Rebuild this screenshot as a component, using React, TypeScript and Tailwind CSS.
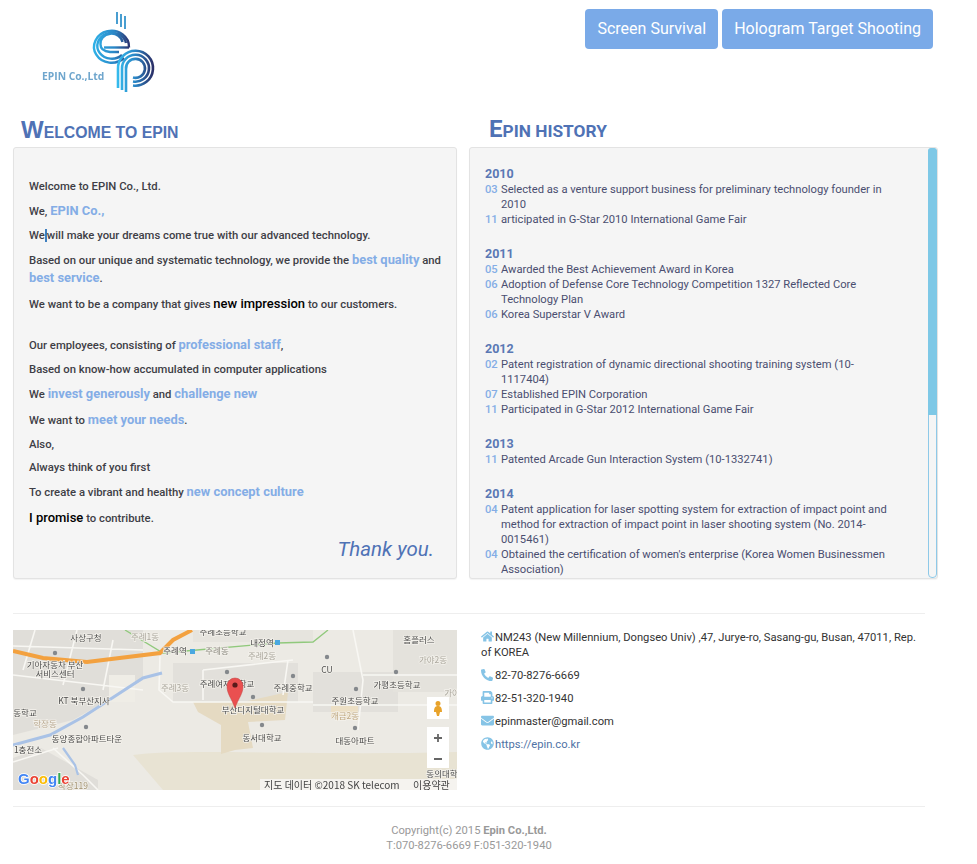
import React from "react";
import { FaHome, FaPrint, FaEnvelope, FaGlobeAmericas, FaPhoneAlt } from "react-icons/fa";

function Logo() {
  return (
    <svg width="120" height="90" viewBox="40 10 120 90" className="block blur-[0.3px]">
      <defs>
        <linearGradient id="le" gradientUnits="userSpaceOnUse" x1="93" x2="129" y1="0" y2="0">
          <stop offset="0" stopColor="#2fb2e8" />
          <stop offset="0.6" stopColor="#2a86c6" />
          <stop offset="1" stopColor="#2b3572" />
        </linearGradient>
        <linearGradient id="lp" gradientUnits="userSpaceOnUse" x1="117" x2="153" y1="0" y2="0">
          <stop offset="0" stopColor="#35bcee" />
          <stop offset="0.5" stopColor="#2a86c6" />
          <stop offset="1" stopColor="#2b3068" />
        </linearGradient>
      </defs>
      <path d="M117 12V24M121 14V27M125 16V29" fill="none" strokeWidth="1.7" stroke="#2a8ec9" />
      <g fill="none" strokeWidth="2.4" stroke="url(#le)">
        <path d="M129 47.5A17.5 16 0 1 0 124 58" />
        <path d="M126 43A14.5 13 0 1 0 122 55" />
        <path d="M122.5 42A11 9.5 0 0 0 100.5 44.5Q100.5 51 110 52H119" />
        <path d="M129 47.5H104" />
      </g>
      <g fill="none" strokeWidth="2.6" stroke="url(#lp)">
        <path d="M118 88V69A17.5 17.5 0 1 1 133 85.5" />
        <path d="M122 90V69A13.5 13.5 0 1 1 133 81.5" />
        <path d="M126 92V69A9.5 9.5 0 1 1 133 77.5" />
      </g>
      <text x="42" y="80" fontFamily="'Open Sans',sans-serif" fontSize="10.3" fontWeight="700" fill="#6fa6cd">EPIN Co.,Ltd</text>
    </svg>
  );
}

function MapView() {
  const labels: [number, number, string, string?][] = [
    [73, 7, "사상구청"], [132, 6, "주례1동", "#aaa69c"], [210, 1, "주례초등학교"], [249, 12, "내정역"],
    [406, 9, "홈플러스"], [162, 20, "주례역"], [204, 20, "주례동", "#8c8a80"], [249, 25, "주례2동", "#aaa69c"],
    [42, 34, "기아자동차 부산"], [42, 43, "서비스센터"], [314, 39, "CU"], [420, 29, "가야2동", "#aaa69c"],
    [162, 57, "주례3동", "#aaa69c"], [214, 53, "주례여자중학교"], [280, 57, "주례중학교"], [384, 54, "가평초등학교"],
    [71, 70, "KT 북부산지사"], [12, 82, "동학교"], [342, 70, "주원초등학교"], [240, 79, "부산디지털대학교"],
    [32, 93, "학장동", "#b8a890"], [332, 85, "개금2동", "#c0a880"], [249, 107, "동서대학교"],
    [74, 108, "동양종합아파트타운"], [342, 110, "대동아파트"], [15, 119, "1충전소"], [429, 143, "동의대학"],
    [60, 155, "착장119", "#a09070"], [439, 62, "가야", "#aaa69c"],
  ];
  return (
    <svg width="444" height="160" viewBox="0 0 444 160" className="block">
      <rect width="444" height="160" fill="#eceae4" />
      <path d="M0 0H130V50L60 90L0 105Z" fill="#e0ded9" />
      <path d="M0 128L28 118L85 150V160H0Z" fill="#e0ded9" />
      <path d="M160 33H285V72H160Z" fill="#e2e0db" />
      <path d="M180 0H300V12H180Z" fill="#e6e4de" />
      <path d="M300 42H385V82H300Z" fill="#e2e0db" />
      <path d="M380 0H444V62H380Z" fill="#e4e2dc" />
      <path d="M96 45H122V72H96Z" fill="#efede6" />
      <path d="M120 125C170 118 300 126 444 122V160H150Z" fill="#e8e3d3" />
      <path d="M180 72H230L275 62L272 90L235 92L240 118L222 120L208 124L208 95L185 82Z" fill="#e5dac2" />
      <path d="M318 76H345V88H318Z" fill="#ecdfc4" />
      <g fill="none" stroke="#f8f7f3" strokeWidth="1.6">
        <path d="M0 45L130 60M0 16L130 20M22 0L10 40M64 0L50 55M100 10L90 60" />
        <path d="M147 26L146 60L160 72H300" />
        <path d="M190 40L280 30M275 30L270 65M190 40L190 70" />
        <path d="M340 0L350 50L345 100M350 45L444 45M300 75H444" />
        <path d="M40 118L70 145L85 160M0 132L45 118" />
      </g>
      <path d="M0 115L37 105L70 87L130 48L149 43" fill="none" stroke="#a9c2e6" strokeWidth="3" />
      <path d="M50 118L62 135L65 145" fill="none" stroke="#a9c2e6" strokeWidth="2.2" />
      <path d="M112 0L150 23L184 20L264 13L300 12L315 0" fill="none" stroke="#90c97c" strokeWidth="1.3" />
      <path d="M0 21L30 28L74 32L147 23L160 10L179 0" fill="none" stroke="#f3a13f" strokeWidth="4" />
      <g fill="#84888c">
        {[[42, 23],[70, 59],[214, 42],[280, 46],[240, 67],[343, 59],[383, 42],[73, 97],[249, 95],[342, 98],[314, 27]].map(([x, y], i) => (
          <circle key={i} cx={x} cy={y} r="2.2" />
        ))}
      </g>
      {labels.map(([x, y, t, c], i) => (
        <text key={i} x={x} y={y + 3.5} textAnchor="middle" fontFamily="'Noto Sans CJK KR',sans-serif" fontSize="8.5" fill={c ?? "#4c4c4c"} stroke="#f4f2ec" strokeWidth="1.5" paintOrder="stroke">{t}</text>
      ))}
      <rect x="177" y="19" width="5" height="5" fill="#4aa8e0" /><rect x="262" y="10" width="5" height="5" fill="#4aa8e0" />
      <path d="M222 78C218 67 214 64 214 56A8 8 0 0 1 230 56C230 64 226 67 222 78Z" fill="#ea5050" stroke="#c04040" strokeWidth="0.5" />
      <circle cx="222" cy="55" r="2.6" fill="#5a1a1a" />
      <rect x="414" y="67" width="22" height="22" fill="#fff" />
      <path d="M425 71A2.5 2.5 0 0 1 425 76C428 76 429 78 429 82L427 82L426 86H424L423 82L421 82C421 78 422 76 425 76A2.5 2.5 0 0 1 425 71Z" fill="#e8a32b" />
      <rect x="414" y="97" width="22" height="41" fill="#fff" />
      <path d="M421 108H429M425 104V112M421 129H429" stroke="#666" strokeWidth="1.8" />
      <text x="5" y="154" fontFamily="'Liberation Sans',sans-serif" fontWeight="700" fontSize="15" stroke="#fff" strokeWidth="1.5" paintOrder="stroke">
        <tspan fill="#4285f4">G</tspan><tspan fill="#ea4335">o</tspan><tspan fill="#fbbc05">o</tspan><tspan fill="#4285f4">g</tspan><tspan fill="#34a853">l</tspan><tspan fill="#ea4335">e</tspan>
      </text>
      <rect x="247" y="149" width="197" height="11" fill="#f5f3ef" />
      <text x="251" y="159" fontFamily="'Noto Sans CJK KR',sans-serif" fontSize="10" fill="#444">지도 데이터 ©2018 SK telecom</text>
      <text x="400" y="159" fontFamily="'Noto Sans CJK KR',sans-serif" fontSize="10" fill="#444">이용약관</text>
    </svg>
  );
}

const H = ({ children }: { children: React.ReactNode }) => (
  <span className="text-[12.9px] font-bold text-[#84ade6]">{children}</span>
);

function P({ children, className = "" }: { children: React.ReactNode; className?: string }) {
  return <p className={`leading-[17px] min-h-[17px] ${className}`}>{children}</p>;
}

const history: { year: string; items: [string, string][] }[] = [
  { year: "2010", items: [["03", "Selected as a venture support business for preliminary technology founder in 2010"], ["11", "articipated in G-Star 2010 International Game Fair"]] },
  { year: "2011", items: [["05", "Awarded the Best Achievement Award in Korea"], ["06", "Adoption of Defense Core Technology Competition 1327 Reflected Core Technology Plan"], ["06", "Korea Superstar V Award"]] },
  { year: "2012", items: [["02", "Patent registration of dynamic directional shooting training system (10-1117404)"], ["07", "Established EPIN Corporation"], ["11", "Participated in G-Star 2012 International Game Fair"]] },
  { year: "2013", items: [["11", "Patented Arcade Gun Interaction System (10-1332741)"]] },
  { year: "2014", items: [["04", "Patent application for laser spotting system for extraction of impact point and method for extraction of impact point in laser shooting system (No. 2014-0015461)"], ["04", "Obtained the certification of women's enterprise (Korea Women Businessmen Association)"], ["07", "Selected as a promising enterprise of export for the small and medium business"]] },
];

const panel = "bg-[#f5f5f5] border border-[#e3e3e3] rounded-[3px] shadow-[0_1px_1px_rgba(0,0,0,0.05)] h-[432px]";
const heading = "h-[32px] pt-[1px] text-[#4f72b5] leading-[27px] font-bold uppercase first-letter:text-[24px]";

function Contact({ icon, children }: { icon: React.ReactNode; children: React.ReactNode }) {
  return (
    <p className="mb-[8px] text-[11.2px] leading-[15px] text-[#333]">
      <span className="inline-block w-[14px] align-[-2px] text-[#86c4e6] text-[13px]">{icon}</span>
      {children}
    </p>
  );
}

export default function App() {
  return (
    <div className="w-[977px] h-[864px] bg-white font-['Roboto',sans-serif] overflow-hidden">
      <header className="flex justify-between h-[115px]">
        <div className="ml-[40px] mt-[10px]"><Logo /></div>
        <div className="flex gap-[4px] mt-[9px] mr-[44px] h-[40px]">
          {["Screen Survival", "Hologram Target Shooting"].map((t) => (
            <button key={t} className="px-[12px] bg-[#7aaae8] text-white text-[16px] rounded-[4px]">{t}</button>
          ))}
        </div>
      </header>

      <main className="flex gap-[12px] ml-[13px]">
        <section className="w-[444px]">
          <h2 className={`${heading} pl-[8px] text-[15.8px] font-['Liberation_Sans',sans-serif]`}>Welcome to epin</h2>
          <div className={`${panel} pl-[15px] pr-[12px] pt-[30px] text-[11.3px] font-medium text-[#3e3e46]`}>
            <P>Welcome to EPIN Co., Ltd.</P>
            <P className="mt-[7px]">We, <H>EPIN Co.,</H></P>
            <P className="mt-[7px]">We<span className="inline-block w-[2px] h-[13px] bg-[#3f7fbf] align-[-3px]" />will make your dreams come true with our advanced technology.</P>
            <P className="mt-[7px]">Based on our unique and systematic technology, we provide the <H>best quality</H> and <H>best service</H>.</P>
            <P className="mt-[8px]">We want to be a company that gives <span className="text-[13px] text-black">new impression</span> to our customers.</P>
            <P className="mt-[23px]">Our employees, consisting of <H>professional staff</H>,</P>
            <P className="mt-[7px]">Based on know-how accumulated in computer applications</P>
            <P className="mt-[7px]">We <H>invest generously</H> and <H>challenge new</H></P>
            <P className="mt-[8px]">We want to <H>meet your needs</H>.</P>
            <P className="mt-[7px]">Also,</P>
            <P className="mt-[6px]">Always think of you first</P>
            <P className="mt-[7px]">To create a vibrant and healthy <H>new concept culture</H></P>
            <P className="mt-[8px]"><span className="text-[13px] text-black">I promise</span> to contribute.</P>
            <p className="text-right text-[20.5px] italic font-normal text-[#4f72b5] leading-[28px] mr-[10px] mt-[8px]">Thank you.</p>
          </div>
        </section>

        <section className="w-[469px]">
          <h2 className={`${heading} pl-[20px] text-[17.3px]`}>Epin history</h2>
          <div className={`${panel} relative overflow-hidden pl-[15px] pr-[41px] pt-[18px]`}>
            {history.map((g) => (
              <div key={g.year} className="mb-[19px]">
                <div className="text-[12.5px] leading-[16px] font-bold text-[#5a78b4]">{g.year}</div>
                {g.items.map(([m, t], i) => (
                  <div key={i} className="flex text-[11.2px] leading-[15px] text-[#4a4e70]">
                    <span className="w-[16px] flex-none font-medium text-[#84ade6]">{m}</span>
                    <span>{t}</span>
                  </div>
                ))}
              </div>
            ))}
            <div className="absolute right-0 top-0 bottom-0 w-[9px] border border-[#8ec9e8] rounded-[4px]">
              <div className="h-[267px] bg-[#7ec8e6] rounded-t-[3px] -mx-px -mt-px" />
            </div>
          </div>
        </section>
      </main>

      <footer className="w-[912px] ml-[13px] mt-[34px]">
        <div className="border-t border-[#eee] pt-[16px] pb-[16px] flex gap-[24px]">
          <div className="w-[444px] h-[160px] flex-none overflow-hidden blur-[0.5px]"><MapView /></div>
          <div>
            <Contact icon={<FaHome />}>NM243 (New Millennium, Dongseo Univ) ,47, Jurye-ro, Sasang-gu, Busan, 47011, Rep. of KOREA</Contact>
            <Contact icon={<FaPhoneAlt className="text-[12px]" />}>82-70-8276-6669</Contact>
            <Contact icon={<FaPrint />}>82-51-320-1940</Contact>
            <Contact icon={<FaEnvelope />}>epinmaster@gmail.com</Contact>
            <Contact icon={<FaGlobeAmericas />}><span className="text-[#4f72a5]">https://epin.co.kr</span></Contact>
          </div>
        </div>
        <div className="border-t border-[#eee] pt-[16px] text-center text-[11.2px] leading-[15px] text-[#999]">
          <div>Copyright(c) 2015 <b className="font-bold">Epin Co.,Ltd.</b></div>
          <div>T:070-8276-6669 F:051-320-1940</div>
        </div>
      </footer>
    </div>
  );
}
